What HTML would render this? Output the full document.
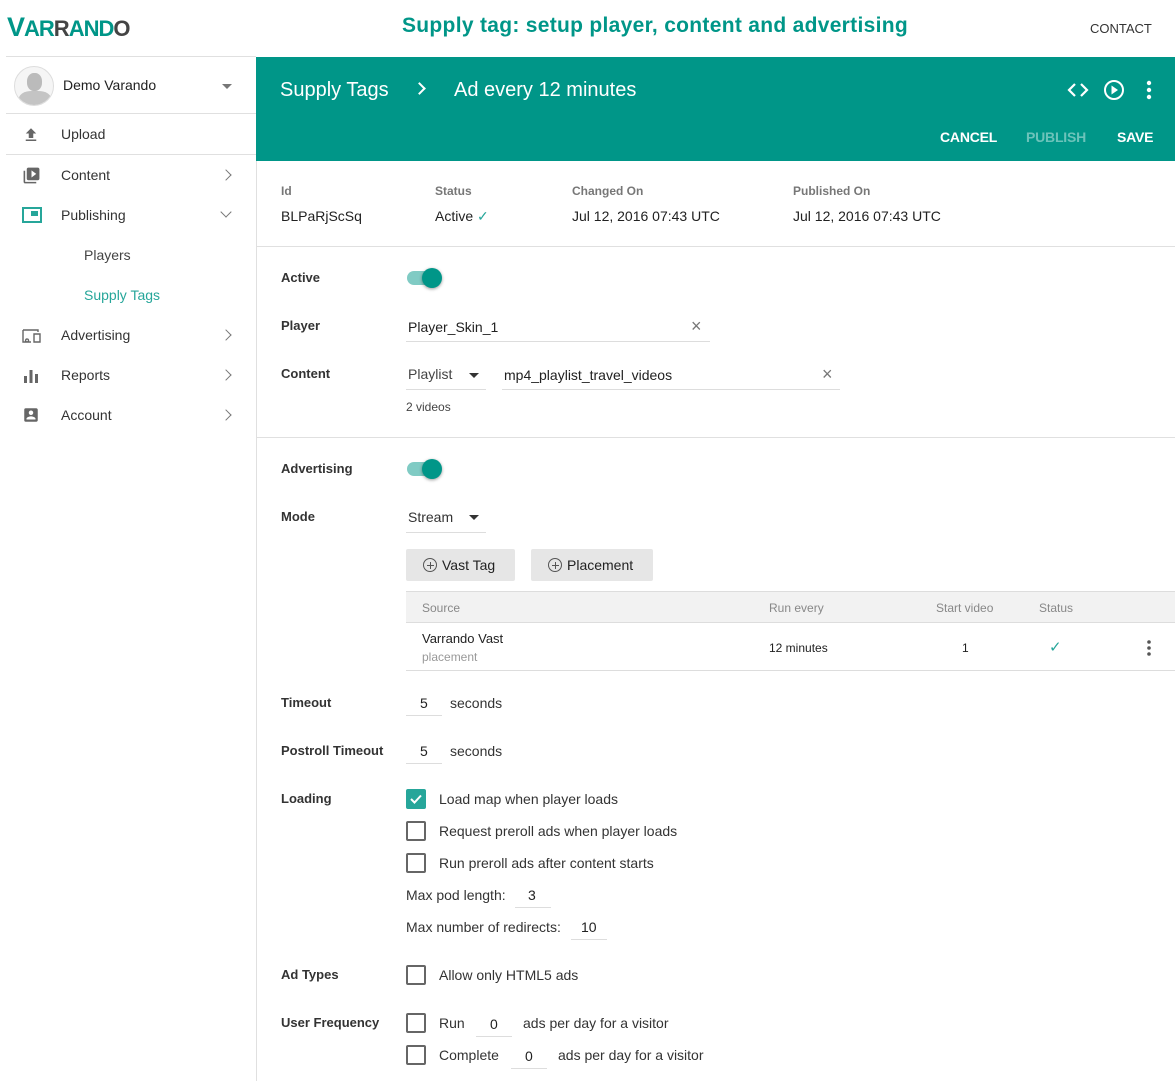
<!DOCTYPE html>
<html><head><meta charset="utf-8"><style>
*{margin:0;padding:0;box-sizing:border-box}
body{width:1175px;height:1081px;position:relative;overflow:hidden;background:#fff;font-family:"Liberation Sans",sans-serif;color:#212121;font-size:14px}
.a{position:absolute;white-space:nowrap}
.lbl{font-weight:bold;font-size:13px;color:#333}
.hl{position:absolute;height:1px;background:#e0e0e0}
.ul{position:absolute;height:1px;background:#ddd}
.cb{position:absolute;width:20px;height:20px;border:2px solid #666;border-radius:2px}
.cbon{background:#26a69a;border-color:#26a69a}
.nav{position:absolute;left:61px;font-size:14px;color:#333}
.chev{position:absolute;left:222px;width:8px;height:8px;border-right:1.6px solid #777;border-top:1.6px solid #777;transform:rotate(45deg)}
.ic{position:absolute;left:22px}
.gh{color:#777;font-size:12px;font-weight:bold}
.tog{position:absolute;width:34px;height:14px;border-radius:7px;background:#80cbc4}
.tog i{position:absolute;right:-1px;top:-3px;width:20px;height:20px;border-radius:50%;background:#009688;box-shadow:0 1px 3px rgba(0,0,0,.4)}
.btn{position:absolute;height:32px;background:#e6e6e6;border-radius:2px;font-size:14px;color:#222;line-height:32px}
.pl{display:inline-block;width:14px;height:14px;border:1.3px solid #555;border-radius:50%;vertical-align:-2px;margin-right:5px;position:relative}
.pl:before{content:"";position:absolute;left:2.5px;top:5.5px;width:7px;height:1.3px;background:#555}
.pl:after{content:"";position:absolute;left:5.5px;top:2.5px;width:1.3px;height:7px;background:#555}
</style></head><body>
<div class="a" style="left:7px;top:12px;font-size:27px;font-weight:bold;color:#009688;letter-spacing:-1px">V<span style="font-size:22px">AR</span><span style="font-size:22px;color:#444">R</span><span style="font-size:22px">AND</span><span style="font-size:22px;color:#444">O</span></div>
<div class="a" style="left:402px;top:14px;font-size:21px;font-weight:bold;color:#009688;letter-spacing:0.3px">Supply tag: setup player, content and advertising</div>
<div class="a" style="left:1090px;top:21px;font-size:13px;color:#333">CONTACT</div>
<div class="hl" style="left:6px;top:56px;width:250px"></div>
<div style="position:absolute;left:256px;top:57px;width:1px;height:1024px;background:#e0e0e0"></div>
<div class="a" style="left:14px;top:66px;width:40px;height:40px;border-radius:50%;border:1px solid #ddd;background:#f5f5f5;overflow:hidden"><div style="position:absolute;left:12px;top:6px;width:15px;height:18px;border-radius:45%;background:#bbb"></div><div style="position:absolute;left:4px;top:24px;width:32px;height:18px;border-radius:40% 40% 0 0;background:#c4c4c4"></div></div>
<div class="a" style="left:63px;top:77px;font-size:14px">Demo Varando</div>
<div class="a" style="left:222px;top:84px;border-left:5px solid transparent;border-right:5px solid transparent;border-top:5px solid #777"></div>
<div class="hl" style="left:6px;top:113px;width:250px"></div>
<svg class="ic" style="top:126px" width="18" height="18" viewBox="0 0 24 24"><path d="M9 16h6v-6h4l-7-7-7 7h4zm-4 2h14v2H5z" fill="#666"/></svg>
<div class="nav" style="top:126px">Upload</div>
<div class="hl" style="left:6px;top:154px;width:250px"></div>
<svg class="ic" style="top:166px" width="19" height="19" viewBox="0 0 24 24"><path d="M4 6H2v14c0 1.1.9 2 2 2h14v-2H4V6zm16-4H8c-1.1 0-2 .9-2 2v12c0 1.1.9 2 2 2h12c1.1 0 2-.9 2-2V4c0-1.100-.9-2-2-2zm-8 12.5v-9l6 4.5-6 4.5z" fill="#666"/></svg>
<div class="nav" style="top:167px">Content</div><div class="chev" style="top:171px"></div>
<svg class="ic" style="top:206px" width="20" height="18" viewBox="0 0 20 18"><rect x="1" y="2" width="18" height="14" fill="none" stroke="#26a69a" stroke-width="2"/><rect x="9" y="5" width="7" height="5" fill="#26a69a"/></svg>
<div class="nav" style="top:207px">Publishing</div><div class="chev" style="top:208px;transform:rotate(135deg)"></div>
<div class="a" style="left:84px;top:247px;color:#444">Players</div>
<div class="a" style="left:84px;top:287px;color:#26a69a">Supply Tags</div>
<svg class="ic" style="top:328px" width="20" height="16" viewBox="0 0 20 16"><path d="M1 2h15v2M1 2v12h8M12 6h6v8h-6z M5 11a1.5 1.5 0 1 0 .1 0" fill="none" stroke="#666" stroke-width="1.4"/></svg>
<div class="nav" style="top:327px">Advertising</div><div class="chev" style="top:331px"></div>
<svg class="ic" style="top:368px" width="18" height="16" viewBox="0 0 18 16"><rect x="2" y="8" width="3" height="7" fill="#666"/><rect x="7.5" y="2" width="3" height="13" fill="#666"/><rect x="13" y="6" width="3" height="9" fill="#666"/></svg>
<div class="nav" style="top:367px">Reports</div><div class="chev" style="top:371px"></div>
<svg class="ic" style="top:406px" width="18" height="18" viewBox="0 0 24 24"><path d="M3 5v14a2 2 0 0 0 2 2h14c1.1 0 2-.9 2-2V5c0-1.1-.9-2-2-2H5a2 2 0 0 0-2 2zm12 4c0 1.66-1.34 3-3 3s-3-1.34-3-3 1.34-3 3-3 3 1.34 3 3zm-9 8c0-2 4-3.1 6-3.1s6 1.1 6 3.1v1H6v-1z" fill="#666"/></svg>
<div class="nav" style="top:407px">Account</div><div class="chev" style="top:411px"></div>
<div class="a" style="left:256px;top:57px;width:919px;height:104px;background:#009688"></div>
<div class="a" style="left:280px;top:79px;font-size:20px;color:#fff">Supply Tags</div>
<div class="a" style="left:415px;top:84px;width:9px;height:9px;border-right:2px solid #fff;border-top:2px solid #fff;transform:rotate(45deg)"></div>
<div class="a" style="left:454px;top:79px;font-size:20px;color:#fff">Ad every 12 minutes</div>
<svg class="a" style="left:1067px;top:80px" width="22" height="20" viewBox="0 0 22 20"><path d="M8 4L2 10l6 6M14 4l6 6-6 6" fill="none" stroke="#fff" stroke-width="2.2"/></svg>
<svg class="a" style="left:1103px;top:79px" width="22" height="22" viewBox="0 0 22 22"><circle cx="11" cy="11" r="9" fill="none" stroke="#fff" stroke-width="2"/><path d="M8.5 6.5v9l6.5-4.5z" fill="#fff"/></svg>
<svg class="a" style="left:1144px;top:80px" width="10" height="20" viewBox="0 0 10 20"><circle cx="5" cy="3" r="2.2" fill="#fff"/><circle cx="5" cy="10" r="2.2" fill="#fff"/><circle cx="5" cy="17" r="2.2" fill="#fff"/></svg>
<div class="a" style="left:940px;top:129px;font-size:14px;font-weight:bold;color:#fff;letter-spacing:-0.2px">CANCEL</div>
<div class="a" style="left:1026px;top:129px;font-size:14px;font-weight:bold;color:#6cc3ba;letter-spacing:-0.2px">PUBLISH</div>
<div class="a" style="left:1117px;top:129px;font-size:14px;font-weight:bold;color:#fff;letter-spacing:-0.2px">SAVE</div>
<div class="a gh" style="left:281px;top:184px">Id</div>
<div class="a gh" style="left:435px;top:184px">Status</div>
<div class="a gh" style="left:572px;top:184px">Changed On</div>
<div class="a gh" style="left:793px;top:184px">Published On</div>
<div class="a" style="left:281px;top:208px">BLPaRjScSq</div>
<div class="a" style="left:435px;top:208px">Active <span style="color:#26a69a">✓</span></div>
<div class="a" style="left:572px;top:208px">Jul 12, 2016 07:43 UTC</div>
<div class="a" style="left:793px;top:208px">Jul 12, 2016 07:43 UTC</div>
<div class="hl" style="left:257px;top:246px;width:918px"></div>
<div class="a lbl" style="left:281px;top:270px">Active</div>
<div class="tog" style="left:407px;top:271px"><i></i></div>
<div class="a lbl" style="left:281px;top:318px">Player</div>
<div class="a" style="left:408px;top:319px">Player_Skin_1</div>
<div class="a" style="left:691px;top:316px;font-size:18px;color:#777">×</div>
<div class="ul" style="left:406px;top:341px;width:304px"></div>
<div class="a lbl" style="left:281px;top:366px">Content</div>
<div class="a" style="left:408px;top:366px;color:#444">Playlist</div>
<div class="a" style="left:469px;top:373px;border-left:5px solid transparent;border-right:5px solid transparent;border-top:5px solid #333"></div>
<div class="ul" style="left:406px;top:389px;width:80px"></div>
<div class="a" style="left:504px;top:367px">mp4_playlist_travel_videos</div>
<div class="a" style="left:822px;top:364px;font-size:18px;color:#777">×</div>
<div class="ul" style="left:502px;top:389px;width:338px"></div>
<div class="a" style="left:406px;top:400px;font-size:12px;color:#444">2 videos</div>
<div class="hl" style="left:257px;top:437px;width:918px"></div>
<div class="a lbl" style="left:281px;top:461px">Advertising</div>
<div class="tog" style="left:407px;top:462px"><i></i></div>
<div class="a lbl" style="left:281px;top:509px">Mode</div>
<div class="a" style="left:408px;top:509px;color:#333">Stream</div>
<div class="a" style="left:469px;top:515px;border-left:5px solid transparent;border-right:5px solid transparent;border-top:5px solid #333"></div>
<div class="ul" style="left:406px;top:532px;width:80px"></div>
<div class="btn" style="left:406px;top:549px;width:109px;padding-left:17px"><span class="pl"></span>Vast Tag</div>
<div class="btn" style="left:531px;top:549px;width:122px;padding-left:17px"><span class="pl"></span>Placement</div>
<div class="a" style="left:406px;top:591px;width:769px;height:32px;background:#f2f2f2;border-top:1px solid #ddd;border-bottom:1px solid #ddd"></div>
<div class="a" style="left:422px;top:601px;font-size:12px;color:#888">Source</div>
<div class="a" style="left:769px;top:601px;font-size:12px;color:#888">Run every</div>
<div class="a" style="left:936px;top:601px;font-size:12px;color:#888">Start video</div>
<div class="a" style="left:1039px;top:601px;font-size:12px;color:#888">Status</div>
<div class="a" style="left:422px;top:631px;font-size:13px">Varrando Vast</div>
<div class="a" style="left:422px;top:650px;font-size:12px;color:#999">placement</div>
<div class="a" style="left:769px;top:641px;font-size:12px">12 minutes</div>
<div class="a" style="left:962px;top:641px;font-size:12px">1</div>
<div class="a" style="left:1049px;top:638px;font-size:15px;color:#26a69a">✓</div>
<svg class="a" style="left:1145px;top:639px" width="8" height="18" viewBox="0 0 8 18"><circle cx="4" cy="3" r="1.8" fill="#555"/><circle cx="4" cy="9" r="1.8" fill="#555"/><circle cx="4" cy="15" r="1.8" fill="#555"/></svg>
<div class="hl" style="left:406px;top:670px;width:769px;background:#ddd"></div>
<div class="a lbl" style="left:281px;top:695px">Timeout</div>
<div class="a" style="left:420px;top:695px">5</div><div class="ul" style="left:406px;top:715px;width:36px"></div>
<div class="a" style="left:450px;top:695px;color:#333">seconds</div>
<div class="a lbl" style="left:281px;top:743px">Postroll Timeout</div>
<div class="a" style="left:420px;top:743px">5</div><div class="ul" style="left:406px;top:763px;width:36px"></div>
<div class="a" style="left:450px;top:743px;color:#333">seconds</div>
<div class="a lbl" style="left:281px;top:791px">Loading</div>
<div class="cb cbon" style="left:406px;top:789px"><svg style="position:absolute;left:1px;top:2px" width="14" height="12" viewBox="0 0 14 12"><path d="M2 6l3.5 3.5L12 2.5" fill="none" stroke="#fff" stroke-width="2"/></svg></div>
<div class="a" style="left:439px;top:791px;color:#333">Load map when player loads</div>
<div class="cb" style="left:406px;top:821px"></div>
<div class="a" style="left:439px;top:823px;color:#333">Request preroll ads when player loads</div>
<div class="cb" style="left:406px;top:853px"></div>
<div class="a" style="left:439px;top:855px;color:#333">Run preroll ads after content starts</div>
<div class="a" style="left:406px;top:887px;color:#333">Max pod length:</div>
<div class="a" style="left:528px;top:887px">3</div><div class="ul" style="left:515px;top:907px;width:36px"></div>
<div class="a" style="left:406px;top:919px;color:#333">Max number of redirects:</div>
<div class="a" style="left:581px;top:919px">10</div><div class="ul" style="left:571px;top:939px;width:36px"></div>
<div class="a lbl" style="left:281px;top:967px">Ad Types</div>
<div class="cb" style="left:406px;top:965px"></div>
<div class="a" style="left:439px;top:967px;color:#333">Allow only HTML5 ads</div>
<div class="a lbl" style="left:281px;top:1015px">User Frequency</div>
<div class="cb" style="left:406px;top:1013px"></div>
<div class="a" style="left:439px;top:1015px;color:#333">Run</div>
<div class="a" style="left:490px;top:1016px">0</div><div class="ul" style="left:476px;top:1036px;width:36px"></div>
<div class="a" style="left:523px;top:1015px;color:#333">ads per day for a visitor</div>
<div class="cb" style="left:406px;top:1045px"></div>
<div class="a" style="left:439px;top:1047px;color:#333">Complete</div>
<div class="a" style="left:525px;top:1048px">0</div><div class="ul" style="left:511px;top:1068px;width:36px"></div>
<div class="a" style="left:558px;top:1047px;color:#333">ads per day for a visitor</div>
</body></html>
